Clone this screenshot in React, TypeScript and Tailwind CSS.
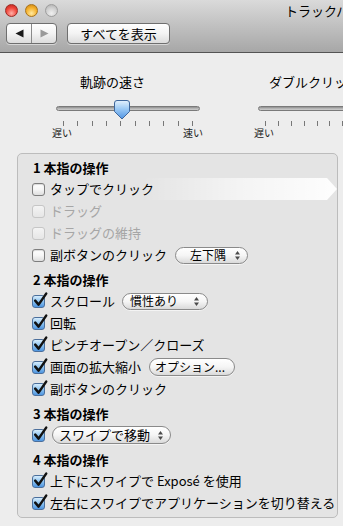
import React from "react";

type BoxProps = {
  checked?: boolean;
  disabled?: boolean;
};

const CheckBox = ({ checked, disabled }: BoxProps) => {
  if (checked) {
    return (
      <span className="relative block w-[13px] h-[13px] shrink-0 rounded-[3px] border border-[#4b6f9c] bg-linear-to-b from-[#d6ecfc] via-[#8cc3f0] to-[#4f95e0]">
        <svg
          className="absolute -top-[4px] left-[0px] overflow-visible"
          width="15"
          height="16"
          viewBox="0 0 15 16"
        >
          <path
            d="M2.2 8.6 L5.6 12.6 L13.2 1.6"
            fill="none"
            stroke="#111"
            strokeWidth="2.5"
            strokeLinecap="round"
            strokeLinejoin="round"
          />
        </svg>
      </span>
    );
  }
  if (disabled) {
    return (
      <span className="block w-[13px] h-[13px] shrink-0 rounded-[3px] border border-[#c6c6c6] bg-linear-to-b from-[#f4f4f4] to-[#e6e6e6]" />
    );
  }
  return (
    <span className="block w-[13px] h-[13px] shrink-0 rounded-[3px] border border-[#7d7d7d] bg-linear-to-b from-white via-[#f6f6f6] to-[#dedede] shadow-[inset_0_1px_1px_rgba(0,0,0,0.15)]" />
  );
};

const UpDown = () => (
  <svg width="5" height="9" viewBox="0 0 5 9" className="shrink-0">
    <path d="M2.5 0 L5 3.5 H0 Z" fill="#4a4a4a" />
    <path d="M0 5.5 H5 L2.5 9 Z" fill="#4a4a4a" />
  </svg>
);

const Thumb = () => (
  <svg width="16" height="20" viewBox="0 0 16 20">
    <defs>
      <linearGradient id="thumbFill" x1="0" y1="0" x2="0" y2="1">
        <stop offset="0" stopColor="#e4f1fd" />
        <stop offset="0.45" stopColor="#9ccaf5" />
        <stop offset="1" stopColor="#4f93e3" />
      </linearGradient>
    </defs>
    <path
      d="M3 0.5 H13 Q15.5 0.5 15.5 3 V11.5 L8 19 L0.5 11.5 V3 Q0.5 0.5 3 0.5 Z"
      fill="url(#thumbFill)"
      stroke="#3f679c"
      strokeWidth="1"
    />
  </svg>
);

type SliderProps = {
  label: string;
  ticks: number;
  showThumb?: boolean;
  labelClass: string;
};

const Slider = ({ label, ticks, showThumb, labelClass }: SliderProps) => (
  <div className="w-[151px] shrink-0">
    <div className={`h-[20px] leading-[20px] text-[13px] whitespace-nowrap text-black ${labelClass}`}>
      {label}
    </div>
    <div className="relative h-[28px] ml-[4px] w-[144px] pt-[14px]">
      <div className="h-[5px] w-full rounded-full border border-[#7a7a7a] bg-linear-to-b from-[#8e8e8e] via-[#b4b4b4] to-[#cdcdcd]" />
      {showThumb && (
        <div className="absolute top-[8px] left-[58px]">
          <Thumb />
        </div>
      )}
    </div>
    <div className="ml-[4px] w-[144px] px-[7px] mt-[1px] h-[5px] flex justify-between">
      {Array.from({ length: ticks }).map((_, i) => (
        <span key={i} className="block w-px h-[5px] bg-[#777]" />
      ))}
    </div>
    <div className="flex justify-between h-[13px] leading-[13px] text-[10px] text-[#222]">
      <span>遅い</span>
      <span>速い</span>
    </div>
  </div>
);

type RowProps = {
  label: string;
  checked?: boolean;
  disabled?: boolean;
  children?: React.ReactNode;
};

const Row = ({ label, checked, disabled, children }: RowProps) => (
  <div className="flex items-center h-[22px]">
    <CheckBox checked={checked} disabled={disabled} />
    <span
      className={`relative ml-[5px] text-[13px] whitespace-nowrap ${
        disabled ? "text-[#a6a6a6]" : "text-black"
      }`}
    >
      {label}
    </span>
    {children}
  </div>
);

const Heading = ({ text }: { text: string }) => (
  <div className="h-[20px] leading-[20px] text-[13px] font-bold text-black pl-[1px] whitespace-pre">
    {text}
  </div>
);

const popup =
  "flex items-center justify-between rounded-full border border-[#8a8a8a] bg-linear-to-b from-white via-[#f5f5f5] to-[#dadada] shadow-[0_1px_0_rgba(255,255,255,0.6)] text-black whitespace-nowrap";

export default function App() {
  return (
    <div className="w-[343px] h-[526px] overflow-hidden bg-[#ededed] font-['Noto_Sans_CJK_JP','Noto_Sans',sans-serif]">
      {/* title bar + toolbar */}
      <div className="h-[53px] border-b border-[#545454] bg-linear-to-b from-[#dadada] to-[#a7a7a7]">
        <div className="flex items-center h-[21px] pl-[5px]">
          <span className="block shrink-0 w-[13px] h-[13px] rounded-full border border-[#9b2a25] bg-[radial-gradient(circle_at_50%_75%,#ffb0a8,#f0453a_55%,#b8231c)]" />
          <span className="block shrink-0 ml-[7px] w-[13px] h-[13px] rounded-full border border-[#a8731a] bg-[radial-gradient(circle_at_50%_75%,#ffe9a0,#f5b12c_55%,#c7800f)]" />
          <span className="block shrink-0 ml-[7px] w-[13px] h-[13px] rounded-full border border-[#9d9d9d] bg-[radial-gradient(circle_at_50%_75%,#f0f0f0,#cfcfcf_55%,#aaaaaa)]" />
          <span className="shrink-0 ml-[227px] text-[13px] leading-[20px] text-black whitespace-nowrap">
            トラックパッド
          </span>
        </div>
        <div className="flex items-center mt-[2px] pl-[6px]">
          <div className="flex h-[21px] w-[51px] rounded-[4px] border border-[#6f6f6f] bg-linear-to-b from-white via-[#f3f3f3] to-[#dcdcdc] shadow-[0_1px_0_rgba(255,255,255,0.5)]">
            <div className="flex flex-1 items-center justify-center border-r border-[#8a8a8a]">
              <svg width="9" height="9" viewBox="0 0 9 9">
                <path d="M0.5 4.5 L8.5 0.5 V8.5 Z" fill="#1a1a1a" />
              </svg>
            </div>
            <div className="flex flex-1 items-center justify-center">
              <svg width="9" height="9" viewBox="0 0 9 9">
                <path d="M8.5 4.5 L0.5 0.5 V8.5 Z" fill="#9a9a9a" />
              </svg>
            </div>
          </div>
          <div className="ml-[10px] flex items-center justify-center h-[21px] w-[103px] rounded-[4px] border border-[#6f6f6f] bg-linear-to-b from-white via-[#f3f3f3] to-[#dcdcdc] text-[13px] text-black shadow-[0_1px_0_rgba(255,255,255,0.5)]">
            すべてを表示
          </div>
        </div>
      </div>

      {/* sliders */}
      <div className="flex gap-[51px] pt-[19px] pl-[52px]">
        <Slider label="軌跡の速さ" ticks={10} showThumb labelClass="pl-[28px]" />
        <Slider label="ダブルクリックの間隔" ticks={11} labelClass="pl-[15px]" />
      </div>

      {/* gestures group */}
      <div className="ml-[17px] mt-[14px] w-[321px] h-[365px] rounded-[5px] border border-[#bcbcbc] bg-[#e4e4e4] pl-[14px] pt-[4px]">
        <Heading text="1 本指の操作" />
        <div className="relative">
          <div className="absolute left-[111px] right-0 top-0 h-[22px] bg-linear-to-r from-white/0 via-white/60 to-white/95 [clip-path:polygon(0_0,calc(100%-10px)_0,100%_50%,calc(100%-10px)_100%,0_100%)]" />
          <Row label="タップでクリック" />
        </div>
        <Row label="ドラッグ" disabled />
        <Row label="ドラッグの維持" disabled />
        <Row label="副ボタンのクリック">
          <div className={`${popup} ml-[8px] w-[73px] h-[17px] pl-[14px] pr-[7px] text-[12px]`}>
            <span>左下隅</span>
            <UpDown />
          </div>
        </Row>

        <div className="mt-[4px]">
          <Heading text="2 本指の操作" />
          <Row label="スクロール" checked>
            <div className={`${popup} ml-[7px] w-[86px] h-[17px] pl-[7px] pr-[8px] text-[12px]`}>
              <span>慣性あり</span>
              <UpDown />
            </div>
          </Row>
          <Row label="回転" checked />
          <Row label="ピンチオープン／クローズ" checked />
          <Row label="画面の拡大縮小" checked>
            <div className={`${popup} ml-[8px] w-[86px] h-[18px] pl-[5px] text-[12px]`}>
              <span>オプション...</span>
            </div>
          </Row>
          <Row label="副ボタンのクリック" checked />
        </div>

        <div className="mt-[4px]">
          <Heading text="3 本指の操作" />
          <div className="flex items-center h-[22px]">
            <CheckBox checked />
            <div className={`${popup} ml-[7px] w-[119px] h-[18px] pl-[6px] pr-[7px] text-[13px]`}>
              <span>スワイプで移動</span>
              <UpDown />
            </div>
          </div>
        </div>

        <div className="mt-[4px]">
          <Heading text="4 本指の操作" />
          <Row label="上下にスワイプで Exposé を使用" checked />
          <Row label="左右にスワイプでアプリケーションを切り替える" checked />
        </div>
      </div>
    </div>
  );
}
